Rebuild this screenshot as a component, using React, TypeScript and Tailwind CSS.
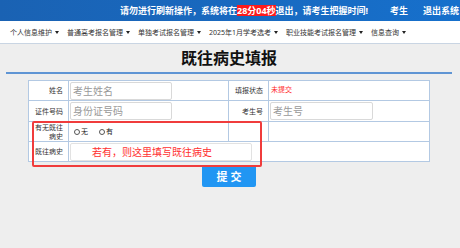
import React from "react";

const navItems = [
  "个人信息维护",
  "普通高考报名管理",
  "单独考试报名管理",
  "2025年1月学考选考",
  "职业技能考试报名管理",
  "信息查询",
];

const Caret: React.FC = () => (
  <span className="inline-block ml-[3px] w-0 h-0 border-l-[2.5px] border-r-[2.5px] border-t-[3px] border-l-transparent border-r-transparent border-t-[#222]" />
);

const Field: React.FC<{ text: string; width: string }> = ({ text, width }) => (
  <div
    className={`${width} h-[18px] ml-[1px] flex items-center pl-[2px] bg-white border border-[#d9d9d9] rounded-[2px] text-[10px] text-[#999] leading-none`}
  >
    {text}
  </div>
);

const Label: React.FC<{ children: React.ReactNode }> = ({ children }) => (
  <td className="border border-[#b3c9e3] bg-white text-right pr-[5px] text-[7px] leading-[9px] text-[#333] align-middle">
    {children}
  </td>
);

export default function App() {
  return (
    <div
      className="w-[460px] h-[248px] bg-[#eeeeee] overflow-hidden relative"
      style={{ fontFamily: '"Noto Sans", "Noto Sans CJK SC", sans-serif' }}
    >
      {/* top bar */}
      <div className="h-[21px] bg-gradient-to-r from-[#1a62b3] to-[#1670cc] flex items-center text-white font-bold text-[9px] leading-none whitespace-nowrap">
        <span className="ml-[120px] w-[243px] shrink-0 flex items-center">
          请勿进行刷新操作，系统将在
          <span className="bg-[#ff1a1a] py-[1px]">28分04秒</span>
          退出，请考生把握时间!
        </span>
        <span className="ml-[27px] shrink-0">考生</span>
        <span className="ml-[15px] shrink-0">退出系统</span>
      </div>

      {/* nav */}
      <div className="h-[23px] bg-white border-b border-[#c9d5e3] flex items-center pl-[10px] gap-[8px] text-[7px] text-[#333] leading-none">
        {navItems.map((n) => (
          <span key={n} className="flex items-center whitespace-nowrap">
            {n}
            <Caret />
          </span>
        ))}
      </div>

      {/* content */}
      <div className="ml-[6px] w-[446px]">
        <div className="h-[28px] flex items-center justify-center text-[16px] font-bold text-[#111] leading-none">
          既往病史填报
        </div>
        <div className="h-[2px] bg-[#5f95d4]" />

        <table className="mt-[6px] mx-auto border-collapse table-fixed w-[401px] border border-[#a9c2df]">
          <colgroup>
            <col className="w-[40px]" />
            <col className="w-[160px]" />
            <col className="w-[40px]" />
            <col className="w-[161px]" />
          </colgroup>
          <tbody>
            <tr className="h-[20px]">
              <Label>姓名</Label>
              <td className="border border-[#b3c9e3] bg-white p-0">
                <Field text="考生姓名" width="w-[102px]" />
              </td>
              <Label>填报状态</Label>
              <td className="border border-[#b3c9e3] bg-white pl-[2px] text-[7px] text-[#ff2a2a]">
                未提交
              </td>
            </tr>
            <tr className="h-[21px]">
              <Label>证件号码</Label>
              <td className="border border-[#b3c9e3] bg-white p-0">
                <Field text="身份证号码" width="w-[102px]" />
              </td>
              <Label>考生号</Label>
              <td className="border border-[#b3c9e3] bg-white p-0">
                <Field text="考生号" width="w-[103px]" />
              </td>
            </tr>
            <tr className="h-[20px]">
              <Label>
                有无既往
                <br />
                病史
              </Label>
              <td className="border border-[#b3c9e3] bg-white p-0">
                <div className="flex items-center pl-[5px] gap-[11px] text-[7px] text-[#222] leading-none">
                  <span className="flex items-center">
                    <span className="w-[6px] h-[6px] rounded-full border border-[#555] mr-[1px]" />无
                  </span>
                  <span className="flex items-center">
                    <span className="w-[6px] h-[6px] rounded-full border border-[#555] mr-[1px]" />有
                  </span>
                </div>
              </td>
              <td className="border border-[#b3c9e3] bg-white" />
              <td className="border border-[#b3c9e3] bg-white" />
            </tr>
            <tr className="h-[20px]">
              <Label>既往病史</Label>
              <td colSpan={3} className="border border-[#b3c9e3] bg-white p-0">
                <div className="w-[182px] h-[18px] ml-[1px] flex items-center pl-[21px] bg-white border border-[#e2e2e2] rounded-[2px] text-[10px] text-[#ff3030] leading-none whitespace-nowrap">
                  若有，则这里填写既往病史
                </div>
              </td>
            </tr>
          </tbody>
        </table>

        <div className="flex justify-center mt-[3px]">
          <button className="w-[54px] h-[22px] bg-[#2196f3] rounded-[2px] text-white text-[11px] font-bold leading-none">
            提 交
          </button>
        </div>
      </div>

      {/* annotation box */}
      <div className="absolute left-[32px] top-[121px] w-[230px] h-[46px] border-2 border-[#f03c3c] rounded-[2px] pointer-events-none" />
    </div>
  );
}
